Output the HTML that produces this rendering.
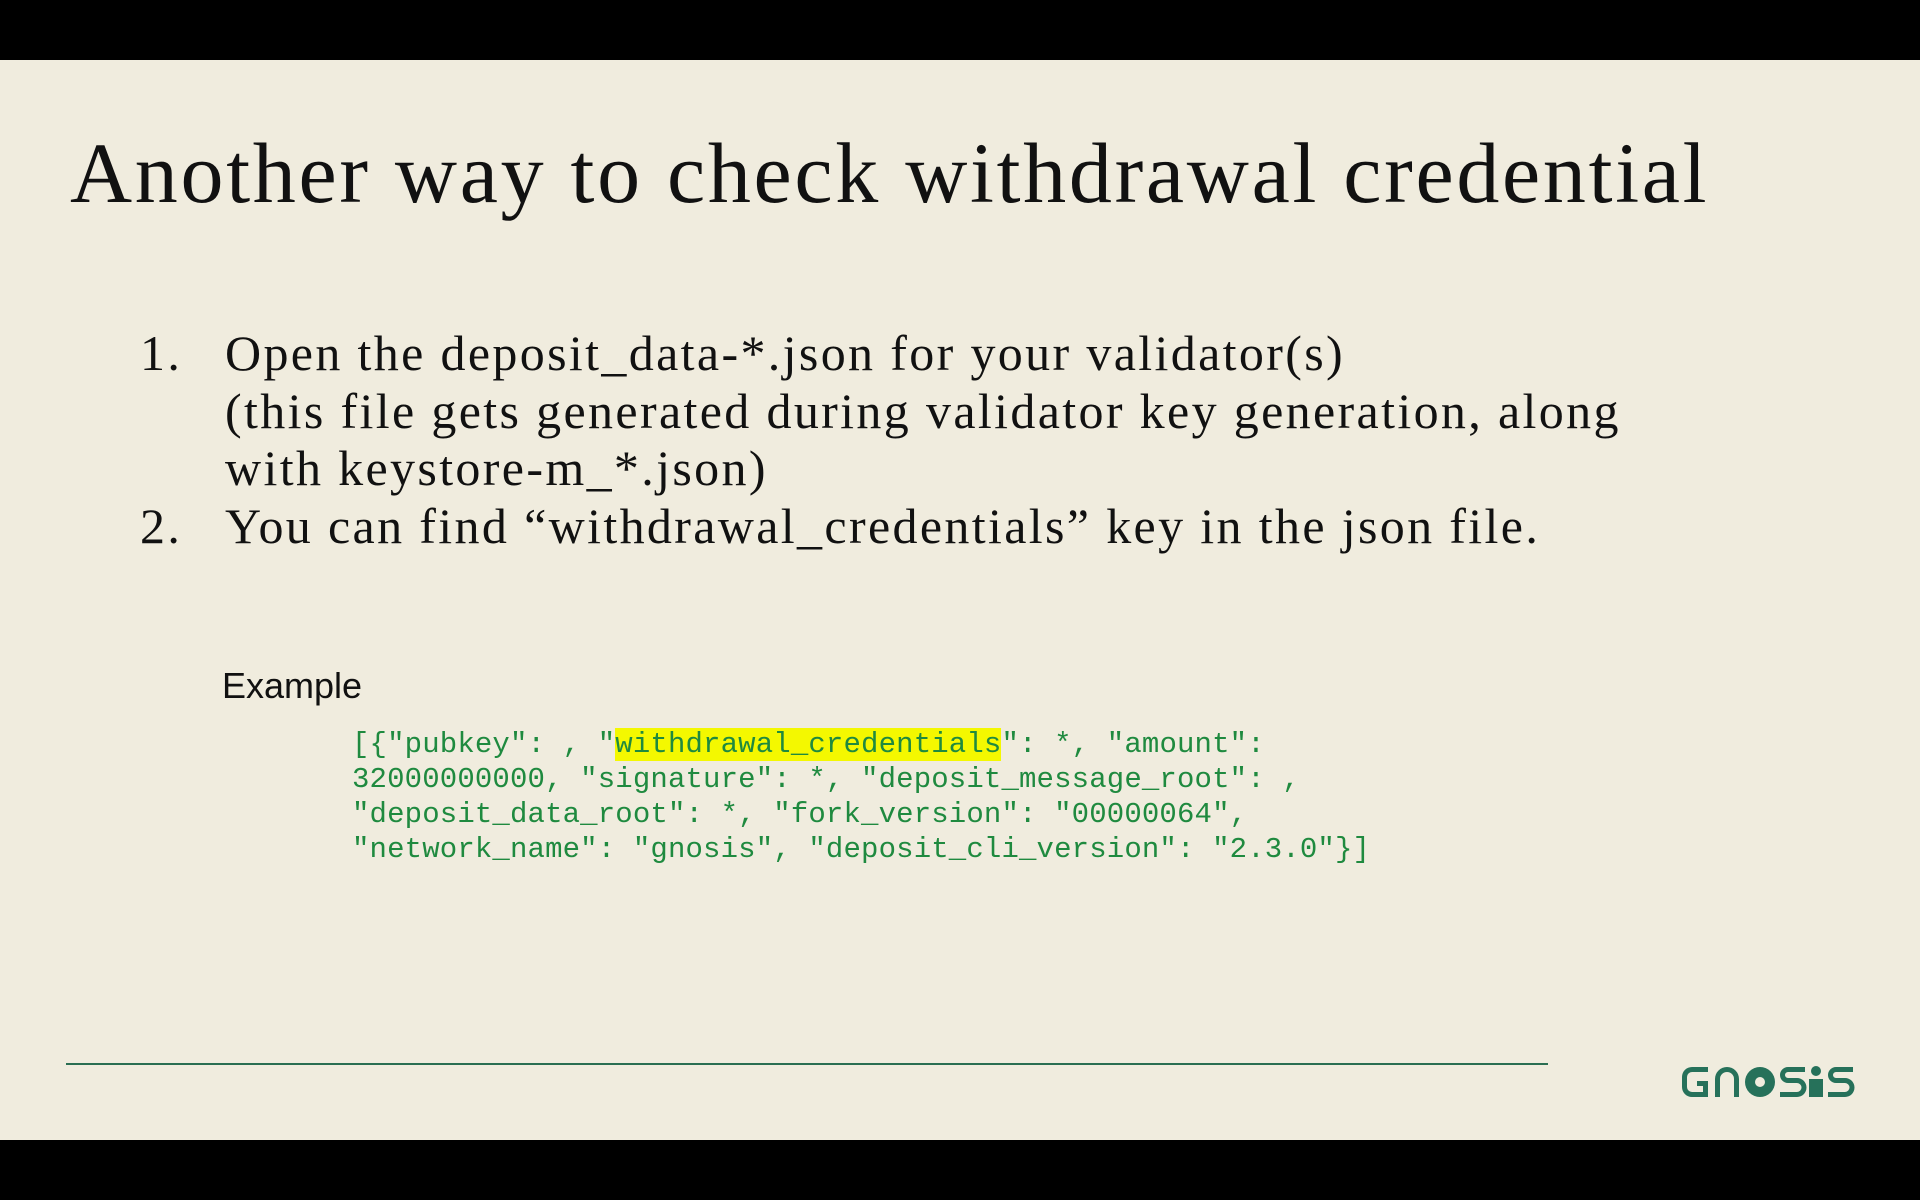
<!DOCTYPE html>
<html><head><meta charset="utf-8"><style>
html,body{margin:0;padding:0}
body{width:1920px;height:1200px;background:#000;position:relative;overflow:hidden}
.slide{position:absolute;left:0;top:60px;width:1920px;height:1080px;background:#f0ecde}
.t{position:absolute;left:70px;top:123px;font:86px "Liberation Serif",serif;letter-spacing:2.7px;color:#111;white-space:nowrap;margin:0}
.list{position:absolute;left:0;top:325px;font:50px/57.5px "Liberation Serif",serif;letter-spacing:2.35px;color:#111}
.list div{position:relative;padding-left:225px;white-space:nowrap}
.list span{position:absolute;left:140px}
.ex{position:absolute;left:222px;top:665px;font:36px "Liberation Sans",sans-serif;color:#111}
.code{position:absolute;left:352px;top:727px;font:29px/35px "Liberation Mono",monospace;letter-spacing:0.15px;color:#1f8a3f;white-space:pre}
.hl{background:#f4f800}
.line{position:absolute;left:66px;top:1063px;width:1482px;height:2px;background:#2a6e52}
</style></head><body>
<div class="slide"></div>
<div class="t">Another way to check withdrawal credential</div>
<div class="list">
<div><span>1.</span>Open the deposit_data-*.json for your validator(s)<br>(this file gets generated during validator key generation, along<br>with keystore-m_*.json)</div>
<div><span>2.</span>You can find “withdrawal_credentials” key in the json file.</div>
</div>
<div class="ex">Example</div>
<div class="code">[{"pubkey": , "<span class="hl">withdrawal_credentials</span>": *, "amount":
32000000000, "signature": *, "deposit_message_root": ,
"deposit_data_root": *, "fork_version": "00000064",
"network_name": "gnosis", "deposit_cli_version": "2.3.0"}]</div>
<div class="line"></div>
<svg style="position:absolute;left:1680px;top:1063px" width="175" height="38" viewBox="0 0 175 38" fill="#26715a">
<path d="M28 4H12A10 10 0 0 0 2 14V24A10 10 0 0 0 12 34H28V18H17V23H23V29H12A5 5 0 0 1 7 24V14A5 5 0 0 1 12 9H28Z"/>
<path d="M35 34V16A12 12 0 0 1 59 16V34H54V16A7 7 0 0 0 40 16V34Z"/>
<circle cx="80" cy="19" r="15"/>
<circle cx="80" cy="19" r="5" fill="#f0ecde"/>
<path d="M125 4H108A8 8 0 0 0 108 20H117A3 3 0 0 1 117 29H100V34H117A8 8 0 0 0 117 15H108A3 3 0 0 1 108 9H125Z"/>
<rect x="129" y="16" width="14" height="18"/>
<circle cx="136" cy="8" r="5"/>
<path d="M173 4H156A8 8 0 0 0 156 20H165A3 3 0 0 1 165 29H148V34H165A8 8 0 0 0 165 15H156A3 3 0 0 1 156 9H173Z"/>
</svg>
</body></html>
